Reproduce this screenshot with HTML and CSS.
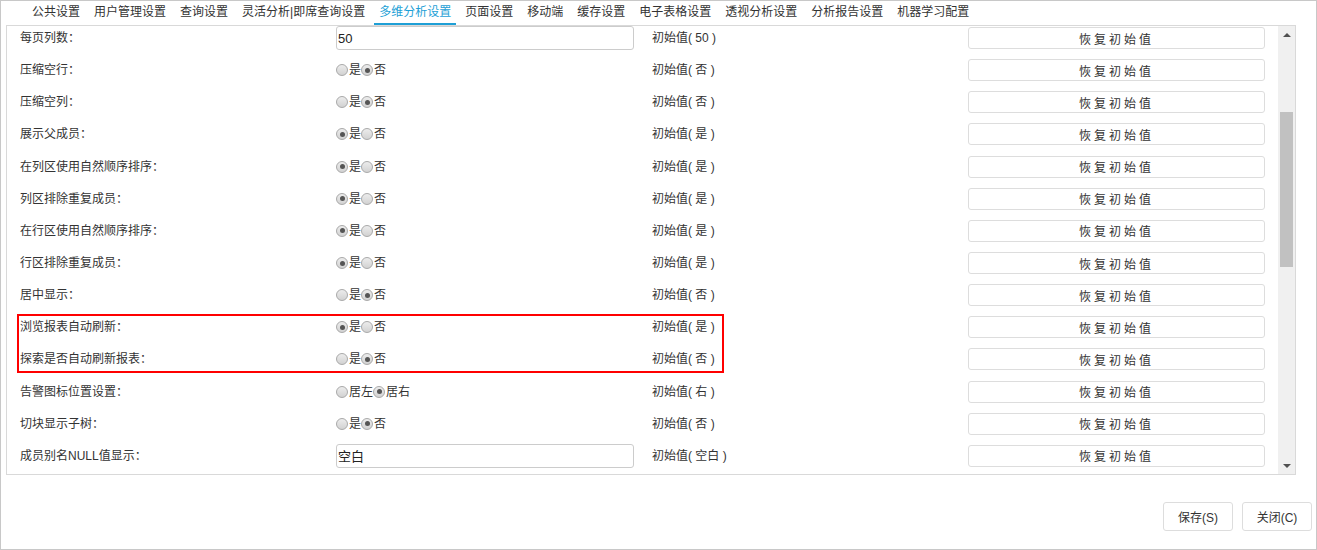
FILE: index.html
```html
<!DOCTYPE html>
<html lang="zh-CN">
  <head>
    <meta charset="UTF-8" />
    <title>系统选项</title>
    <link rel="stylesheet" href="styles.css">
  </head>
  <body>
    <div class="frame">
      <div class="tabs">
        <span class="tab">公共设置</span>
        <span class="tab">用户管理设置</span>
        <span class="tab">查询设置</span>
        <span class="tab">灵活分析|即席查询设置</span>
        <span class="tab active">多维分析设置</span>
        <span class="tab">页面设置</span>
        <span class="tab">移动端</span>
        <span class="tab">缓存设置</span>
        <span class="tab">电子表格设置</span>
        <span class="tab">透视分析设置</span>
        <span class="tab">分析报告设置</span>
        <span class="tab">机器学习配置</span>
      </div>

      <div class="panel">
        <div class="list">
          <div class="rows">
            <div class="row">
              <span class="label">每页列数：</span>
              <span><input class="text-input" type="text" value="50"></span>
              <span class="init">初始值( 50 )</span>
              <span><button class="reset">恢复初始值</button></span>
            </div>
            <div class="row">
              <span class="label">压缩空行：</span>
              <span class="radios"><i class="radio"></i>是<i class="radio on"></i>否</span>
              <span class="init">初始值( 否 )</span>
              <span><button class="reset">恢复初始值</button></span>
            </div>
            <div class="row">
              <span class="label">压缩空列：</span>
              <span class="radios"><i class="radio"></i>是<i class="radio on"></i>否</span>
              <span class="init">初始值( 否 )</span>
              <span><button class="reset">恢复初始值</button></span>
            </div>
            <div class="row">
              <span class="label">展示父成员：</span>
              <span class="radios"><i class="radio on"></i>是<i class="radio"></i>否</span>
              <span class="init">初始值( 是 )</span>
              <span><button class="reset">恢复初始值</button></span>
            </div>
            <div class="row">
              <span class="label">在列区使用自然顺序排序：</span>
              <span class="radios"><i class="radio on"></i>是<i class="radio"></i>否</span>
              <span class="init">初始值( 是 )</span>
              <span><button class="reset">恢复初始值</button></span>
            </div>
            <div class="row">
              <span class="label">列区排除重复成员：</span>
              <span class="radios"><i class="radio on"></i>是<i class="radio"></i>否</span>
              <span class="init">初始值( 是 )</span>
              <span><button class="reset">恢复初始值</button></span>
            </div>
            <div class="row">
              <span class="label">在行区使用自然顺序排序：</span>
              <span class="radios"><i class="radio on"></i>是<i class="radio"></i>否</span>
              <span class="init">初始值( 是 )</span>
              <span><button class="reset">恢复初始值</button></span>
            </div>
            <div class="row">
              <span class="label">行区排除重复成员：</span>
              <span class="radios"><i class="radio on"></i>是<i class="radio"></i>否</span>
              <span class="init">初始值( 是 )</span>
              <span><button class="reset">恢复初始值</button></span>
            </div>
            <div class="row">
              <span class="label">居中显示：</span>
              <span class="radios"><i class="radio"></i>是<i class="radio on"></i>否</span>
              <span class="init">初始值( 否 )</span>
              <span><button class="reset">恢复初始值</button></span>
            </div>

            <!-- les deux options encadrées en rouge -->
            <div class="group">
              <div class="row">
                <span class="label">浏览报表自动刷新：</span>
                <span class="radios"><i class="radio on"></i>是<i class="radio"></i>否</span>
                <span class="init">初始值( 是 )</span>
                <span><button class="reset">恢复初始值</button></span>
              </div>
              <div class="row">
                <span class="label">探索是否自动刷新报表：</span>
                <span class="radios"><i class="radio"></i>是<i class="radio on"></i>否</span>
                <span class="init">初始值( 否 )</span>
                <span><button class="reset">恢复初始值</button></span>
              </div>
              <div class="mark"></div>
            </div>

            <div class="row">
              <span class="label">告警图标位置设置：</span>
              <span class="radios"><i class="radio"></i>居左<i class="radio on"></i>居右</span>
              <span class="init">初始值( 右 )</span>
              <span><button class="reset">恢复初始值</button></span>
            </div>
            <div class="row">
              <span class="label">切块显示子树：</span>
              <span class="radios"><i class="radio"></i>是<i class="radio on"></i>否</span>
              <span class="init">初始值( 否 )</span>
              <span><button class="reset">恢复初始值</button></span>
            </div>
            <div class="row">
              <span class="label">成员别名NULL值显示：</span>
              <span><input class="text-input" type="text" value="空白"></span>
              <span class="init">初始值( 空白 )</span>
              <span><button class="reset">恢复初始值</button></span>
            </div>
          </div>
        </div>

        <div class="scrollbar">
          <div class="arrow"><span class="tri-up"></span></div>
          <div class="track"><div class="thumb"></div></div>
          <div class="arrow"><span class="tri-down"></span></div>
        </div>
      </div>

      <div class="footer">
        <button class="btn">保存(S)</button>
        <button class="btn">关闭(C)</button>
      </div>
    </div>
  </body>
</html>
```

FILE: styles.css
```css
:root {
  --text: #333;
  --line: #d9d9d9;
  --blue: #1e9fd6;
  --font: "Liberation Sans", "Noto Sans CJK SC", sans-serif;
}

* {
  margin: 0;
  padding: 0;
  box-sizing: border-box;
}

body {
  background: #fff;
  color: var(--text);
  font-family: var(--font);
  font-size: 12px;
}

.frame {
  width: 1317px;
  height: 550px;
  border: 1px solid #c8c8c8;
  display: flex;
  flex-direction: column;
}

/* barre d'onglets */
.tabs {
  display: flex;
  height: 24px;
  padding-left: 24px;
}

.tab {
  margin: 0 2px;
  padding: 0 5px;
  line-height: 23px;
  border-bottom: 2px solid transparent;
  white-space: nowrap;
  color: var(--text);
}

.tab.active {
  color: var(--blue);
  border-bottom-color: var(--blue);
}

/* panneau des options */
.panel {
  margin: 0 20px 0 5px;
  height: 450px;
  border: 1px solid var(--line);
  display: flex;
}

.list {
  flex: 1;
  overflow: hidden;
  padding-left: 13px;
}

.rows {
  margin-top: -4px; /* contenu légèrement défilé */
}

.row {
  display: grid;
  grid-template-columns: 316px 316px 316px 316px;
  height: 32.15px;
  align-items: center;
}

.label,
.init {
  line-height: 16px;
  white-space: nowrap;
}

.text-input {
  width: 298px;
  height: 24px;
  border: 1px solid #ccc;
  border-radius: 3px;
  padding: 0 1px;
  font-family: var(--font);
  font-size: 13px;
  color: #222;
  outline: none;
  display: block;
}

.radios {
  display: flex;
  align-items: center;
  line-height: 16px;
}

.radio {
  width: 12px;
  height: 12px;
  margin-right: 1px;
  border: 1px solid #a9a9a9;
  border-radius: 50%;
  background: linear-gradient(#ececec, #d2d2d2);
  display: flex;
  align-items: center;
  justify-content: center;
}

.radio.on::after {
  content: "";
  width: 5px;
  height: 5px;
  border-radius: 50%;
  background: #555;
}

.reset {
  width: 297px;
  height: 22px;
  border: 1px solid #ddd;
  border-radius: 3px;
  background: #fff;
  font-family: var(--font);
  font-size: 12px;
  letter-spacing: 3px;
  color: var(--text);
  display: block;
}

.group {
  position: relative;
}

.mark {
  position: absolute;
  left: -3px;
  top: 3px;
  width: 707px;
  height: 59px;
  border: 2px solid #f00;
  pointer-events: none;
}

/* barre de défilement */
.scrollbar {
  width: 17px;
  background: #f0f0f0;
  display: flex;
  flex-direction: column;
}

.arrow {
  height: 17px;
  display: flex;
  align-items: center;
  justify-content: center;
}

.tri-up {
  border-left: 4px solid transparent;
  border-right: 4px solid transparent;
  border-bottom: 4px solid #505050;
}

.tri-down {
  border-left: 4px solid transparent;
  border-right: 4px solid transparent;
  border-top: 4px solid #505050;
}

.track {
  flex: 1;
}

.thumb {
  margin: 69px 2px 0;
  height: 155px;
  background: #c1c1c1;
}

/* boutons du bas */
.footer {
  display: flex;
  justify-content: flex-end;
  gap: 9px;
  padding: 27px 4px 0;
}

.btn {
  width: 70px;
  height: 29px;
  border: 1px solid #ddd;
  border-radius: 3px;
  background: #fff;
  font-family: var(--font);
  font-size: 12px;
  color: var(--text);
}
```
